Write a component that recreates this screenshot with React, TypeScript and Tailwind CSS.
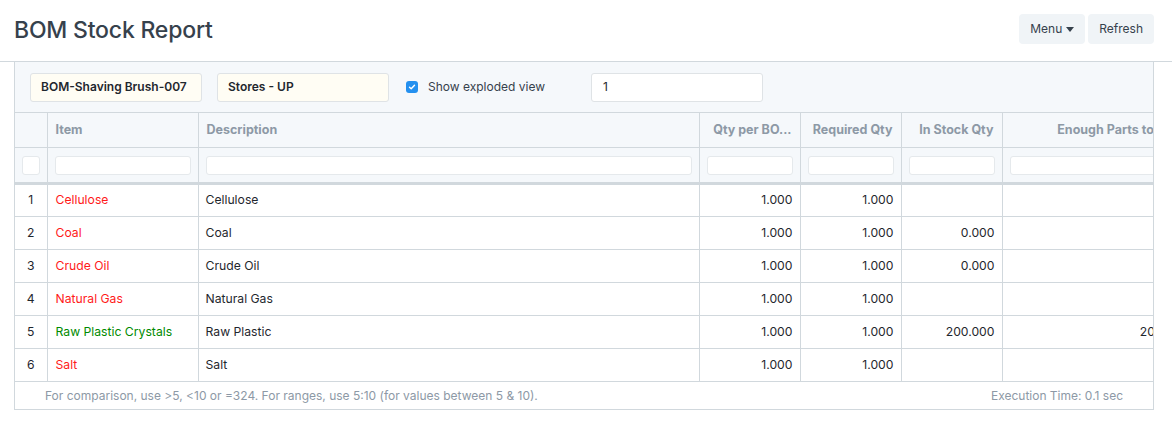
import { useState } from 'react';

const rows = [
  { n: 1, item: 'Cellulose', desc: 'Cellulose', qty: '1.000', req: '1.000', stock: '', enough: '', ok: false },
  { n: 2, item: 'Coal', desc: 'Coal', qty: '1.000', req: '1.000', stock: '0.000', enough: '', ok: false },
  { n: 3, item: 'Crude Oil', desc: 'Crude Oil', qty: '1.000', req: '1.000', stock: '0.000', enough: '', ok: false },
  { n: 4, item: 'Natural Gas', desc: 'Natural Gas', qty: '1.000', req: '1.000', stock: '', enough: '', ok: false },
  { n: 5, item: 'Raw Plastic Crystals', desc: 'Raw Plastic', qty: '1.000', req: '1.000', stock: '200.000', enough: '200.000', ok: true },
  { n: 6, item: 'Salt', desc: 'Salt', qty: '1.000', req: '1.000', stock: '', enough: '', ok: false },
];

const columns = [
  { label: 'Item', w: 'w-[151px]', right: false },
  { label: 'Description', w: 'w-[501px]', right: false },
  { label: 'Qty per BO...', w: 'w-[101px]', right: true },
  { label: 'Required Qty', w: 'w-[101px]', right: true },
  { label: 'In Stock Qty', w: 'w-[101px]', right: true },
  { label: 'Enough Parts to Build', w: 'w-[194px]', right: true },
];

export default function App() {
  const [exploded, setExploded] = useState(true);

  return (
    <div className="min-h-[432px] bg-white font-['Inter',sans-serif] text-[12px] text-[#1f272e]">
      {/* Page head */}
      <div className="flex h-[62px] items-center justify-between border-b border-[#d1d8dd] pl-[14px] pr-[18px]">
        <h1 className="text-[23px] font-medium tracking-[-0.2px] text-[#36414c]">BOM Stock Report</h1>
        <div className="flex gap-[3px] pb-[3px]">
          <button className="flex h-[30px] items-center gap-1 rounded-[4px] bg-[#f0f4f7] px-[11px] text-[12px] text-[#36414c]">
            Menu
            <svg width="8" height="5" viewBox="0 0 8 5"><path d="M0 0h8L4 5z" fill="#36414c" /></svg>
          </button>
          <button className="h-[30px] rounded-[4px] bg-[#f0f4f7] px-[11px] text-[12px] text-[#36414c]">Refresh</button>
        </div>
      </div>

      <div className="ml-[14px] mr-[18px] overflow-hidden border-x border-b border-[#d1d8dd]">
        {/* Filters */}
        <div className="flex h-[50px] items-center bg-[#f5f8fb] pl-[15px]">
          <div className="flex h-[29px] w-[172px] items-center rounded-[3px] border border-[#dfe3e6] bg-[#fffdf4] px-[10px] text-[12px] font-semibold">
            BOM-Shaving Brush-007
          </div>
          <div className="ml-[15px] flex h-[29px] w-[172px] items-center rounded-[3px] border border-[#dfe3e6] bg-[#fffdf4] px-[10px] text-[12px] font-semibold">
            Stores - UP
          </div>
          <label className="ml-[17px] flex w-[185px] items-center gap-[10px] text-[12px] text-[#36414c]">
            <span
              onClick={() => setExploded(!exploded)}
              className="flex h-[12px] w-[12px] items-center justify-center rounded-[3px] bg-[#2490ef]"
            >
              {exploded && (
                <svg width="8" height="8" viewBox="0 0 8 8">
                  <path d="M1.5 4.2l1.7 1.6 3.3-3.6" stroke="white" strokeWidth="1.4" fill="none" strokeLinecap="round" strokeLinejoin="round" />
                </svg>
              )}
            </span>
            Show exploded view
          </label>
          <div className="flex h-[29px] w-[172px] items-center rounded-[3px] border border-[#dfe3e6] bg-white px-[11px] text-[12px]">
            1
          </div>
        </div>

        {/* Table */}
        <table className="w-[1181px] min-w-[1181px] table-fixed border-collapse">
          <colgroup>
            <col className="w-[32px]" />
            {columns.map((c) => (
              <col key={c.label} className={c.w} />
            ))}
          </colgroup>
          <thead className="bg-[#f5f8fb]">
            <tr className="h-[35px] border-y border-[#d1d8dd]">
              <th className="border-r border-[#d1d8dd]" />
              {columns.map((c) => (
                <th
                  key={c.label}
                  className={`whitespace-nowrap border-r border-[#d1d8dd] px-[8px] text-[12.5px] font-bold text-[#8d99a6] ${c.right ? 'text-right' : 'text-left'}`}
                >
                  {c.label}
                </th>
              ))}
            </tr>
            <tr className="h-[36px] border-b-[3px] border-[#d1d8dd]">
              <th className="border-r border-[#d1d8dd] px-[7px]">
                <div className="h-[19px] rounded-[3px] border border-[#e5e9ec] bg-white" />
              </th>
              {columns.map((c) => (
                <th key={c.label} className="border-r border-[#d1d8dd] px-[7px]">
                  <div className="h-[19px] rounded-[3px] border border-[#e5e9ec] bg-white" />
                </th>
              ))}
            </tr>
          </thead>
          <tbody className="text-[12.2px]">
            {rows.map((r) => (
              <tr key={r.n} className="h-[33px] border-b border-[#d1d8dd]">
                <td className="border-r border-[#d1d8dd] text-center">{r.n}</td>
                <td className={`border-r border-[#d1d8dd] px-[8px] ${r.ok ? 'text-[#008a00]' : 'text-[#ff1a1a]'}`}>{r.item}</td>
                <td className="border-r border-[#d1d8dd] px-[7px]">{r.desc}</td>
                <td className="border-r border-[#d1d8dd] px-[7px] text-right">{r.qty}</td>
                <td className="border-r border-[#d1d8dd] px-[7px] text-right">{r.req}</td>
                <td className="border-r border-[#d1d8dd] px-[7px] text-right">{r.stock}</td>
                <td className="border-r border-[#d1d8dd] px-[7px] text-right">{r.enough}</td>
              </tr>
            ))}
          </tbody>
        </table>

        {/* Footer */}
        <div className="flex h-[27px] items-center justify-between pl-[30px] pr-[30px] text-[12px] text-[#8d99a6]">
          <span>For comparison, use &gt;5, &lt;10 or =324. For ranges, use 5:10 (for values between 5 &amp; 10).</span>
          <span>Execution Time: 0.1 sec</span>
        </div>
      </div>
    </div>
  );
}
